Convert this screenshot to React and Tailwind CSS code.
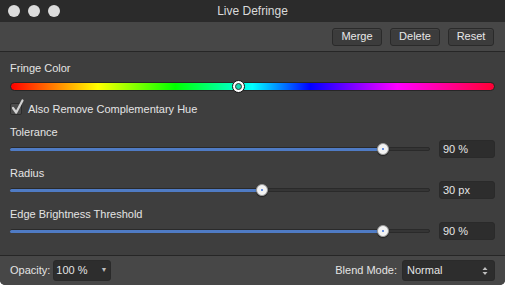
import React from 'react';

const FONT = { fontFamily: '"Liberation Sans", Arial, sans-serif' };

const HUE =
  'linear-gradient(to right, #ff0000 0%, #ffff00 18%, #00ff00 34%, #00ffff 50%, #0000ff 62%, #ff00ff 80%, #ff0033 100%)';

const sliders = [
  { label: 'Tolerance', value: '90 %', pct: 0.9 },
  { label: 'Radius', value: '30 px', pct: 0.603 },
  { label: 'Edge Brightness Threshold', value: '90 %', pct: 0.9 },
];

const ToolButton = ({ children, w }) => (
  <button
    className={`h-[18px] ${w} rounded-[3px] border border-[#2a2a2a] bg-[#3c3c3c] text-[11px] leading-none text-[#e8e8e8] shadow-[inset_0_1px_0_rgba(255,255,255,0.05)]`}
  >
    {children}
  </button>
);

const Slider = ({ pct }) => (
  <div className="relative h-[18px] flex-1">
    {/* groove */}
    <div className="absolute left-0 right-0 top-[7px] h-[4px] rounded-full border border-[#2a2a2a] bg-[#353535]" />
    {/* fill */}
    <div
      className="absolute left-0 top-[8px] h-[3px] rounded-full bg-[#4f7bc4]"
      style={{ width: `calc(6px + ${pct} * (100% - 12px))` }}
    />
    {/* thumb */}
    <div
      className="absolute top-[3px] flex h-[12px] w-[12px] items-center justify-center rounded-full border border-[#9a9a9a] bg-[#f2f2f2] shadow-[0_1px_1px_rgba(0,0,0,0.5)]"
      style={{ left: `calc(${pct} * (100% - 12px))` }}
    >
      <div className="h-[2px] w-[2px] rounded-full bg-[#3a6fd8]" />
    </div>
  </div>
);

const App = () => {
  return (
    <div className="h-[285px] w-[505px] bg-white" style={FONT}>
      <div className="flex h-full flex-col overflow-hidden rounded-b-[5px] bg-[#3e3e3e] text-[11px] text-[#e4e4e4]">
        {/* title bar */}
        <div className="grid h-[22px] grid-cols-[1fr_auto_1fr] items-center bg-[#2b2b2b]">
          <div className="flex gap-[8px] pl-[8px]">
            <span className="h-[12px] w-[12px] rounded-full bg-[#dcdcdc]" />
            <span className="h-[12px] w-[12px] rounded-full bg-[#dcdcdc]" />
            <span className="h-[12px] w-[12px] rounded-full bg-[#dcdcdc]" />
          </div>
          <div className="text-[12px] text-[#dadada]">Live Defringe</div>
          <div />
        </div>

        {/* toolbar */}
        <div className="flex h-[30px] items-center justify-end gap-[8px] border-b border-[#262626] bg-[#474747] pr-[11px]">
          <ToolButton w="w-[50px]">Merge</ToolButton>
          <ToolButton w="w-[50px]">Delete</ToolButton>
          <ToolButton w="w-[46px]">Reset</ToolButton>
        </div>

        {/* body */}
        <div className="flex flex-1 flex-col px-[10px] pt-[9px]">
          <div className="h-[14px] leading-[14px]">Fringe Color</div>

          <div className="relative mt-[7px] h-[9px] rounded-full border border-[#262626]" style={{ background: HUE }}>
            <div className="absolute left-[221px] top-[-3.5px] h-[13px] w-[13px] rounded-full border border-[#111] bg-white p-[2px]">
              <div className="h-full w-full rounded-full border border-[#333] bg-[#19d6b0]" />
            </div>
          </div>

          <div className="mt-[12px] flex h-[12px] items-center gap-[6px]">
            <div className="relative h-[12px] w-[12px] rounded-[2px] border border-[#2c2c2c] bg-[#4c4c4c]">
              <svg className="absolute left-[0px] top-[-5px]" width="14" height="16" viewBox="0 0 14 16">
                <path d="M2 9 L5.2 13.5 L11.5 1.5" fill="none" stroke="#d2d2d2" strokeWidth="2.2" strokeLinecap="round" strokeLinejoin="round" />
              </svg>
            </div>
            <span className="leading-[14px]">Also Remove Complementary Hue</span>
          </div>

          <div className="mt-[10px] flex flex-col">
            {sliders.map((s, i) => (
              <div key={s.label} className={i > 0 ? 'mt-[8px]' : ''}>
                <div className="h-[14px] leading-[14px]">{s.label}</div>
                <div className="mt-[1px] flex h-[18px] items-center">
                  <Slider pct={s.pct} />
                  <div className="ml-[9px] flex h-[18px] w-[56px] items-center rounded-[3px] border border-[#2a2a2a] bg-[#2d2d2d] pl-[3px] text-[#e6e6e6]">
                    {s.value}
                  </div>
                </div>
              </div>
            ))}
          </div>
        </div>

        {/* bottom bar */}
        <div className="flex h-[30px] items-center border-t border-[#262626] bg-[#474747] px-[10px]">
          <span>Opacity:</span>
          <div className="ml-[3px] flex h-[21px] w-[58px] items-center justify-between rounded-[3px] border border-[#2a2a2a] bg-[#2d2d2d] pl-[2px] pr-[3px]">
            <span>100 %</span>
            <span className="text-[7px] text-[#bdbdbd]">▼</span>
          </div>
          <div className="flex-1" />
          <span>Blend Mode:</span>
          <div className="ml-[5px] flex h-[21px] w-[93px] items-center justify-between rounded-[3px] border border-[#2a2a2a] bg-[#2d2d2d] pl-[4px] pr-[6px]">
            <span>Normal</span>
            <svg width="6" height="10" viewBox="0 0 6 10">
              <path d="M0.5 4 L3 1 L5.5 4 Z M0.5 6 L3 9 L5.5 6 Z" fill="#bdbdbd" />
            </svg>
          </div>
        </div>
      </div>
    </div>
  );
};

export default App;
